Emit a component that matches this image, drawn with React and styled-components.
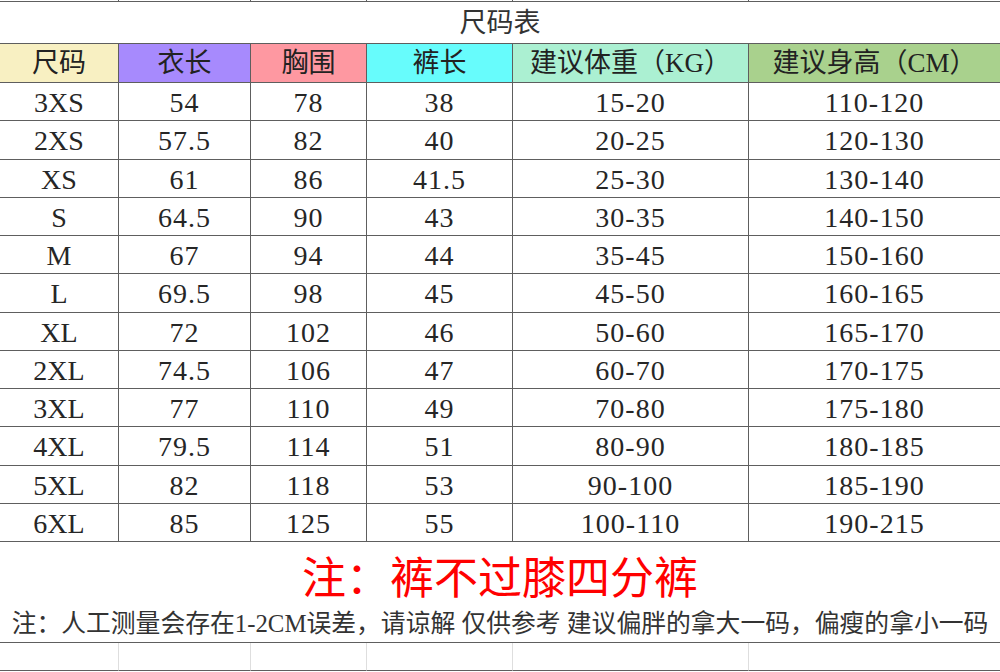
import React from 'react'
import styled, { createGlobalStyle } from 'styled-components'

const GlobalStyle = createGlobalStyle`
  html, body {
    margin: 0;
    padding: 0;
    background: #fff;
  }
  body {
    font-family: "Liberation Serif", "Noto Sans CJK SC", serif;
  }
`

const LINE = '#5e5e5e'
const LIGHT = '#dedede'

const Page = styled.div`
  width: 1000px;
  height: 672px;
  overflow: hidden;
  background: #fff;
`

const Grid = styled.div`
  display: grid;
  grid-template-columns: 118px 132px 116px 146px 236px 252px;
  grid-template-rows: 2px 42px 39px repeat(12, 1fr) 101px 28px;
  height: 671px;
`

const Cell = styled.div`
  box-sizing: border-box;
  display: flex;
  align-items: center;
  justify-content: center;
  grid-column: span ${p => p.$span || 1};
  border-bottom: 1px solid ${LINE};
  border-left: ${p => (p.$first ? 'none' : `1px solid ${p.$light ? LIGHT : LINE}`)};
  background: ${p => p.$bg || '#fff'};
  color: #262626;
  font-size: 28px;
  line-height: 1;
  white-space: nowrap;
  overflow: hidden;
`

const TitleCell = styled(Cell)`
  color: #333;
  font-size: 27px;
  padding-top: 2px;
`

const HeadCell = styled(Cell)`
  font-size: 27px;
  color: #222;
`

const DataCell = styled(Cell)`
  padding-top: 3px;
  letter-spacing: ${p => (p.$first ? '0' : '1px')};
`

const NoteCell = styled(Cell)`
  flex-direction: column;
  justify-content: flex-start;
  padding-top: 13px;
`

const RedNote = styled.div`
  color: #ff0000;
  font-size: 44px;
  line-height: 50px;
`

const SmallNote = styled.div`
  margin-top: 5px;
  color: #333;
  font-size: 24.8px;
  line-height: 28px;
`

const headers = [
  { label: '尺码', bg: '#f8f0c2' },
  { label: '衣长', bg: '#a78afd' },
  { label: '胸围', bg: '#fe98a1' },
  { label: '裤长', bg: '#67fcfc' },
  { label: '建议体重（KG）', bg: '#abf0d2' },
  { label: '建议身高（CM）', bg: '#a9d18d' },
]

const rows = [
  ['3XS', '54', '78', '38', '15-20', '110-120'],
  ['2XS', '57.5', '82', '40', '20-25', '120-130'],
  ['XS', '61', '86', '41.5', '25-30', '130-140'],
  ['S', '64.5', '90', '43', '30-35', '140-150'],
  ['M', '67', '94', '44', '35-45', '150-160'],
  ['L', '69.5', '98', '45', '45-50', '160-165'],
  ['XL', '72', '102', '46', '50-60', '165-170'],
  ['2XL', '74.5', '106', '47', '60-70', '170-175'],
  ['3XL', '77', '110', '49', '70-80', '175-180'],
  ['4XL', '79.5', '114', '51', '80-90', '180-185'],
  ['5XL', '82', '118', '53', '90-100', '185-190'],
  ['6XL', '85', '125', '55', '100-110', '190-215'],
]

export default function App() {
  return (
    <Page>
      <GlobalStyle />
      <Grid>
        {headers.map((h, i) => (
          <Cell key={'top' + i} $first={i === 0} />
        ))}

        <TitleCell $span={6} $first>尺码表</TitleCell>

        {headers.map((h, i) => (
          <HeadCell key={h.label} $bg={h.bg} $first={i === 0}>
            {h.label}
          </HeadCell>
        ))}

        {rows.map(row =>
          row.map((v, i) => (
            <DataCell key={row[0] + i} $first={i === 0}>
              {v}
            </DataCell>
          ))
        )}

        <NoteCell $span={6} $first>
          <RedNote>注：裤不过膝四分裤</RedNote>
          <SmallNote>
            注：人工测量会存在1-2CM误差，请谅解 仅供参考 建议偏胖的拿大一码，偏瘦的拿小一码
          </SmallNote>
        </NoteCell>

        {headers.map((h, i) => (
          <Cell key={'bottom' + i} $first={i === 0} $light />
        ))}
      </Grid>
    </Page>
  )
}
